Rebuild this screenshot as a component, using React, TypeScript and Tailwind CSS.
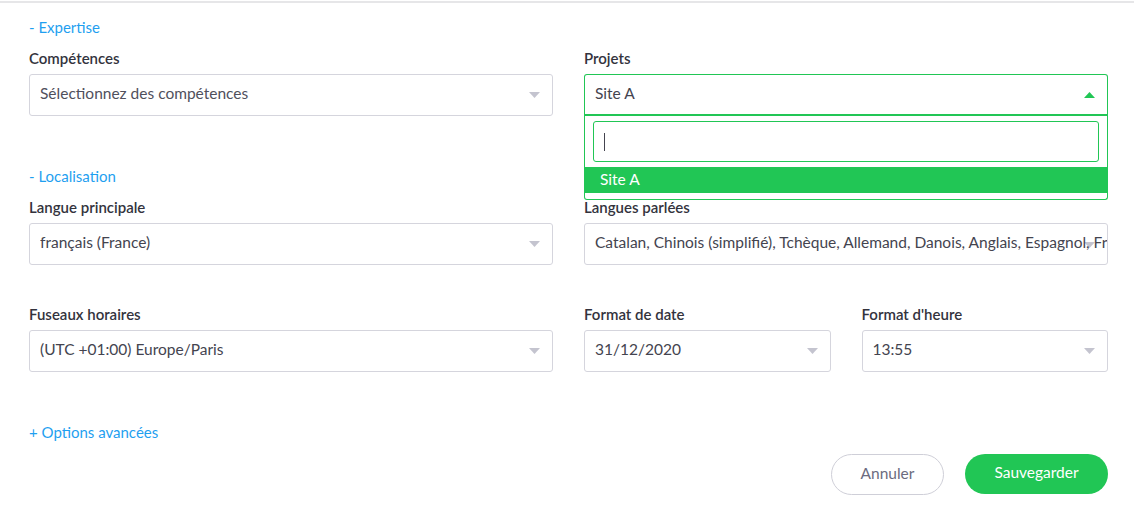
import type { ReactNode } from 'react';

const font = { fontFamily: 'Lato, "Open Sans", sans-serif' };

function Caret({ up = false, green = false }: { up?: boolean; green?: boolean }) {
  return (
    <svg width="11" height="6" viewBox="0 0 11 6" className="shrink-0">
      <path d={up ? 'M0 6 L5.5 0 L11 6 Z' : 'M0 0 L11 0 L5.5 6 Z'} fill={green ? '#21c655' : '#c4c4cf'} />
    </svg>
  );
}

function Field({ label, children }: { label: string; children: ReactNode }) {
  return (
    <div>
      <div className="text-[15px] leading-5 font-semibold text-[#33333d] mb-[6px]">{label}</div>
      {children}
    </div>
  );
}

function Select({ value, placeholder = false }: { value: string; placeholder?: boolean }) {
  return (
    <div className="h-[42px] border border-[#d5d5dd] rounded-[3px] bg-white flex items-center pl-[10px] pr-[12px] gap-2">
      <span className={`flex-1 truncate text-[15.5px] pb-[2px] ${placeholder ? 'text-[#50505c]' : 'text-[#44444f]'}`}>{value}</span>
      <Caret />
    </div>
  );
}

function SectionLink({ children }: { children: ReactNode }) {
  return <div className="text-[15px] leading-5 text-[#1f9ff0]">{children}</div>;
}

export default function App() {
  return (
    <div style={font} className="w-[1134px] h-[521px] bg-white overflow-hidden">
      <div className="mt-px border-t-2 border-[#e6e6e8]" />
      <div className="pl-[29px] pr-[26px]">
        <div className="pt-[14px]">
          <SectionLink>- Expertise</SectionLink>
        </div>

        <div className="grid grid-cols-2 gap-x-[31px] mt-[11px]">
          <Field label="Compétences">
            <Select value="Sélectionnez des compétences" placeholder />
          </Field>
          <Field label="Projets">
            <div className="relative">
              <div className="h-[42px] border border-[#21c655] border-b-2 rounded-t-[3px] bg-white flex items-center pl-[10px] pr-[12px]">
                <span className="flex-1 text-[15.5px] pb-[2px] text-[#44444f]">Site A</span>
                <Caret up green />
              </div>
              <div className="absolute left-0 right-0 top-[42px] z-10 bg-white border border-t-0 border-[#21c655] rounded-b-[3px] pt-[5px] pb-[6px]">
                <div className="mx-[8px] h-[41px] border border-[#21c655] rounded-[3px] flex items-center pl-[10px]">
                  <div className="w-px h-[18px] bg-[#44444f]" />
                </div>
                <div className="mt-[5px] h-[26px] bg-[#21c655] text-white text-[15.5px] flex items-center pl-[15px] pb-[1px]">Site A</div>
              </div>
            </div>
          </Field>
        </div>

        <div className="mt-[50px]">
          <SectionLink>- Localisation</SectionLink>
        </div>

        <div className="grid grid-cols-2 gap-x-[31px] mt-[11px]">
          <Field label="Langue principale">
            <Select value="français (France)" />
          </Field>
          <Field label="Langues parlées">
            <div className="h-[42px] border border-[#d5d5dd] rounded-[3px] bg-white relative flex items-center pl-[10px] overflow-hidden">
              <div className="absolute right-[12px] top-[18px]">
                <Caret />
              </div>
              <span className="relative whitespace-nowrap text-[15.5px] pb-[2px] text-[#44444f]">
                Catalan, Chinois (simplifié), Tchèque, Allemand, Danois, Anglais, Espagnol, Français
              </span>
            </div>
          </Field>
        </div>

        <div className="grid grid-cols-2 gap-x-[31px] mt-[39px]">
          <Field label="Fuseaux horaires">
            <Select value="(UTC +01:00) Europe/Paris" />
          </Field>
          <div className="grid grid-cols-2 gap-x-[31px]">
            <Field label="Format de date">
              <Select value="31/12/2020" />
            </Field>
            <Field label="Format d'heure">
              <Select value="13:55" />
            </Field>
          </div>
        </div>

        <div className="mt-[50px]">
          <SectionLink>+ Options avancées</SectionLink>
        </div>

        <div className="flex justify-end gap-[21px] mt-[12px]">
          <button className="w-[113px] h-[41px] rounded-full border border-[#cfcfd8] text-[15.5px] pb-[2px] text-[#6c6c80] bg-white">
            Annuler
          </button>
          <button className="w-[143px] h-[40px] rounded-full bg-[#21c655] text-[15.5px] pb-[2px] text-white">
            Sauvegarder
          </button>
        </div>
      </div>
    </div>
  );
}
